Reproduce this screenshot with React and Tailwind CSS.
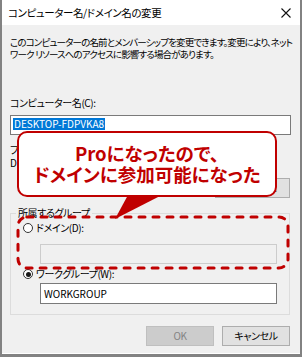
import React from "react";

const jp = "font-['Noto_Sans_CJK_JP','Noto_Sans',sans-serif] [font-feature-settings:'palt']";

const Radio = ({ checked, label }) => (
    <div className="flex items-center h-[12px] pl-[12px]">
        <span className="w-[10px] h-[10px] rounded-full border border-[#333] bg-white flex items-center justify-center">
            {checked && <span className="w-[5px] h-[5px] rounded-full bg-[#1a1a1a]" />}
        </span>
        <span className="ml-[3px]">{label}</span>
    </div>
);

const App = () => {
    return (
        <div className={`relative w-[302px] h-[357px] flex flex-col border-x-2 border-b-[3px] border-[#828282] text-[10px] leading-[12px] tracking-[-0.4px] text-black ${jp}`}>
            {/* title bar */}
            <div className="h-[25px] bg-white flex items-center justify-between pl-[6px] pr-[9px] text-[10.5px] tracking-[-0.4px]">
                <span>コンピューター名/ドメイン名の変更</span>
                <svg width="10" height="10" viewBox="0 0 10 10" className="text-[#111]">
                    <path d="M0.5 0.5 L9.5 9.5 M9.5 0.5 L0.5 9.5" stroke="currentColor" strokeWidth="1.1" fill="none" />
                </svg>
            </div>

            {/* body */}
            <div className="flex-1 flex flex-col bg-[#f0f0f0] border-b border-white pl-[8px] pr-[10px]">
                <div className="mt-[11px] whitespace-pre text-[9.5px] tracking-[-0.85px]">
                    <div>このコンピューターの名前とメンバーシップを変更できます。変更により、ネット</div>
                    <div>ワーク リソースへのアクセスに影響する場合があります。</div>
                </div>

                <div className="mt-[37px]">コンピューター名(C):</div>
                <div className="mt-[6px] h-[20px] -mr-[1px] bg-white border border-[#7a7a7a] flex items-start pt-[2px] pl-[2px]">
                    <span className="bg-[#0078d7] text-white px-[1px] leading-[12px] tracking-normal">DESKTOP-FDPVKA8</span>
                </div>

                <div className="mt-[9px]">フル コンピューター名:</div>
                <div className="mt-[1px] tracking-normal">DESKTOP-FDPVKA8</div>

                <div className="mt-[9px] flex justify-end">
                    <button className="w-[75px] h-[20px] bg-[#e1e1e1] border border-[#adadad] flex items-center justify-center">
                        その他(M)...
                    </button>
                </div>

                <fieldset className="mt-[9px] border border-[#dcdcdc] pb-[10px]">
                    <legend className="ml-[5px] px-[2px]">所属するグループ</legend>
                    <div className="mt-[3px]">
                        <Radio label="ドメイン(D):" />
                    </div>
                    <div className="mt-[10px] ml-[29px] w-[237px] h-[20px] bg-[#f0f0f0] border border-[#cccccc]" />
                    <div className="mt-[4px]">
                        <Radio checked label="ワークグループ(W):" />
                    </div>
                    <div className="mt-[3px] ml-[29px] w-[237px] h-[21px] bg-white border border-[#7a7a7a] flex items-center pl-[3px] tracking-normal">
                        WORKGROUP
                    </div>
                </fieldset>

                <div className="mt-[11px] flex justify-end gap-[8px]">
                    <button className="w-[68px] h-[20px] bg-[#cccccc] border border-[#bfbfbf] text-[#838383] flex items-center justify-center">
                        OK
                    </button>
                    <button className="w-[68px] h-[20px] bg-[#e1e1e1] border border-[#adadad] flex items-center justify-center">
                        キャンセル
                    </button>
                </div>
            </div>

            {/* callout */}
            <svg className="absolute left-[108px] top-[193px]" width="56" height="30" viewBox="0 0 56 30">
                <polygon points="18,2 52,2 5,26" fill="#c00000" />
            </svg>
            <div className="absolute left-[15px] top-[131px] w-[260px] h-[66px] bg-white border-[2.5px] border-[#c00000] rounded-[10px] flex flex-col items-center justify-center text-[#c00000] text-[18.5px] leading-[21px] font-bold tracking-normal">
                <div>Proになったので、</div>
                <div>ドメインに参加可能になった</div>
            </div>

            {/* dashed highlight */}
            <svg className="absolute left-[13px] top-[214px]" width="276" height="58" viewBox="0 0 276 58">
                <rect x="3" y="3" width="270" height="51" rx="9" fill="none" stroke="#c00000" strokeWidth="3" strokeDasharray="6 8" strokeLinecap="round" />
            </svg>
        </div>
    );
};

export default App;
